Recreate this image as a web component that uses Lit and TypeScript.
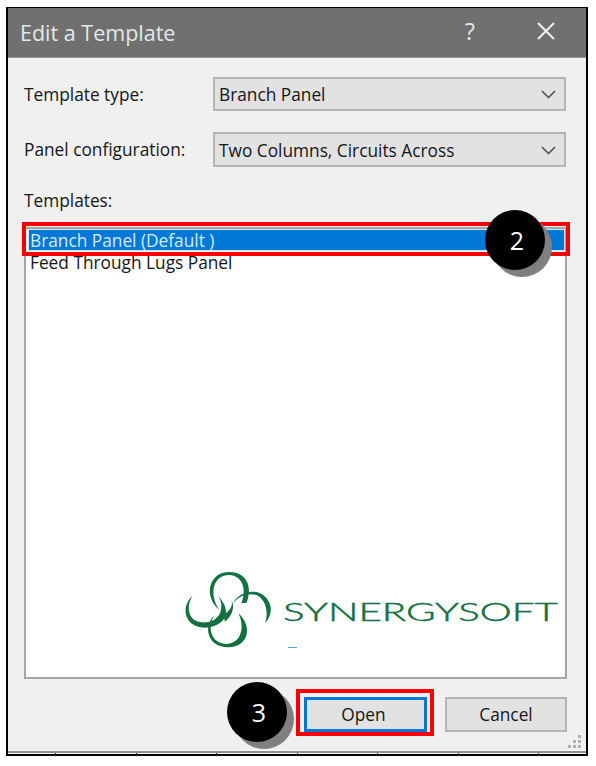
import { LitElement, html, css } from "lit";
import { customElement } from "lit/decorators.js";

@customElement("app-root")
export class AppRoot extends LitElement {
  static styles = css`
    :host { display: block; width: 596px; height: 766px; background: #fff; position: relative; overflow: hidden;
      font-family: "Open Sans", "Noto Sans", sans-serif; color: #161616; font-size: 17.3px; }
    .dialog { position: absolute; left: 6px; top: 7px; width: 578px; height: 746px; border: 2px solid #000; border-top-width: 1px; background: #f0f0f0; display: flex; flex-direction: column; }
    .title { height: 50px; flex: none; background: #707070; color: #e2e8ea; display: flex; align-items: center; padding-left: 12px; font-size: 21.5px; box-sizing: border-box; border-bottom: 1px solid #9a9a9a; }
    .title .t { flex: 1; }
    .help { width: 20px; font-size: 23px; text-align: center; margin-right: 57px; margin-top: -4px; }
    .close { width: 18px; height: 18px; margin-right: 31px; margin-top: -4px; }
    .body { flex: 1; padding: 19px 19px 0 16px; display: flex; flex-direction: column; min-height: 0; }
    .row { display: grid; grid-template-columns: 189px 353px; align-items: center; }
    .row + .row { margin-top: 21px; }
    .select { height: 34px; box-sizing: border-box; border: 2px solid #b4b4b4; background: #e2e2e2; display: flex; align-items: center; justify-content: space-between; padding: 1px 8px 0 4px; }
    .row + .row .select { height: 35px; padding-top: 2px; }
    .chev { width: 15px; height: 9px; }
    .lt { margin-top: 23px; line-height: 22px; height: 22px; }
    .list { margin-top: 15px; height: 452px; width: 543px; box-sizing: border-box; border: 2px solid #a4a6aa; background: #fff; padding: 0 0 0 2px; flex: none; }
    .item { height: 23px; line-height: 22px; padding: 1px 0 0 2px; box-sizing: border-box; }
    .item.sel { background: #0078d7; color: #d8ecfa; border: 1px solid #cfe4f6; padding: 0 0 0 1px; height: 22px; }
    .buttons { margin-top: 18px; display: flex; justify-content: flex-end; gap: 18px; }
    .btn { width: 122px; height: 35px; box-sizing: border-box; border: 2px solid #b4b4b4; background: #e2e2e2; display: flex; align-items: center; justify-content: center; }
    .btn.def { border: 3px solid #0078d7; width: 123px; padding-right: 4px; }
    .foot { height: 4px; flex: none; background: linear-gradient(#fafafa 0 1px, #8e8e8e 1px 3px, #fff 3px); margin-top: auto; }
    .redbox { position: absolute; border: 4px solid #fb0000; box-sizing: border-box; }
    .r1 { left: 22px; top: 222px; width: 548px; height: 34px; }
    .r2 { left: 296px; top: 689px; width: 138px; height: 47px; }
    .badge { position: absolute; width: 60px; height: 60px; border-radius: 50%; background: #000; color: #fff; box-shadow: 7px 7px 0 #808080; display: flex; align-items: center; justify-content: center; font-size: 25px; padding-left: 4px; box-sizing: border-box; }
    .b2 { left: 485px; top: 210px; }
    .b3 { left: 227px; top: 682px; }
    .logo { position: absolute; left: 170px; top: 560px; width: 400px; height: 100px; }
    .lname { position: absolute; left: 283px; top: 592px; font-family: "Lato", "Liberation Sans", sans-serif; font-weight: 300; font-size: 25px; line-height: 38px; color: #13703f; transform-origin: 0 50%; transform: scaleX(1.61); white-space: nowrap; -webkit-text-stroke: 0.45px #13703f; }
    .dash { position: absolute; left: 288px; top: 647px; width: 9px; height: 1px; background: #4aa8e0; }
    .grip { position: absolute; left: 568px; top: 733px; width: 16px; height: 18px; }
    .ticks { position: absolute; left: 55px; top: 753px; display: flex; gap: 79.5px; }
    .ticks i { width: 1px; height: 3px; background: #222; display: block; }
  `;

  render() {
    return html`
      <div class="dialog">
        <div class="title">
          <span class="t">Edit a Template</span>
          <span class="help">?</span>
          <svg class="close" viewBox="0 0 18 18"><path d="M1 1 L17 17 M17 1 L1 17" stroke="#eef1f2" stroke-width="2" fill="none"/></svg>
        </div>
        <div class="body">
          <div class="row"><span>Template type:</span>
            <div class="select"><span>Branch Panel</span>${this.chev()}</div></div>
          <div class="row"><span>Panel configuration:</span>
            <div class="select"><span>Two Columns, Circuits Across</span>${this.chev()}</div></div>
          <div class="lt">Templates:</div>
          <div class="list">
            <div class="item sel">Branch Panel (Default )</div>
            <div class="item">Feed Through Lugs Panel</div>
          </div>
          <div class="buttons">
            <div class="btn def">Open</div>
            <div class="btn">Cancel</div>
          </div>
        </div>
        <div class="foot"></div>
      </div>
      <div class="ticks">${[0, 1, 2, 3, 4, 5, 6].map(() => html`<i></i>`)}</div>
      <svg class="logo" viewBox="0 0 1200 300" fill="#13703f">
        <path d="M148 150 C100 110 115 36 178 36 C225 36 250 75 230 128 L214 130 C232 85 215 46 178 45 C130 45 115 100 148 150Z"/>
        <path d="M68 108 C40 130 38 175 72 195 C110 215 165 195 168 160 C170 135 150 115 138 100 C155 118 158 140 150 160 C135 190 95 195 70 178 C52 160 52 130 68 108Z"/>
        <path d="M132 168 C100 195 110 262 175 262 C235 262 250 200 205 160 C225 200 215 248 172 252 C125 252 110 205 132 168Z"/>
        <path d="M185 135 C205 95 250 85 280 105 C310 130 308 165 285 190 C295 160 290 125 265 108 C240 95 205 105 185 135Z"/>
        <path d="M160 165 C185 150 190 130 183 120 C195 135 190 165 165 185Z"/>
      </svg>
      <div class="lname">SYNERGYSOFT</div>
      <div class="dash"></div>
      <svg class="grip" viewBox="0 0 16 18" fill="#b0b0b0">
        <rect x="10" y="2" width="3" height="3"/><rect x="5" y="7" width="3" height="3"/><rect x="10" y="7" width="3" height="3"/>
        <rect x="0" y="12" width="3" height="3"/><rect x="5" y="12" width="3" height="3"/><rect x="10" y="12" width="3" height="3"/>
      </svg>
      <div class="redbox r1"></div>
      <div class="redbox r2"></div>
      <div class="badge b2">2</div>
      <div class="badge b3">3</div>
    `;
  }

  chev() {
    return html`<svg class="chev" viewBox="0 0 15 9"><path d="M1 1 L7.5 7.5 L14 1" stroke="#555" stroke-width="1.6" fill="none"/></svg>`;
  }
}
